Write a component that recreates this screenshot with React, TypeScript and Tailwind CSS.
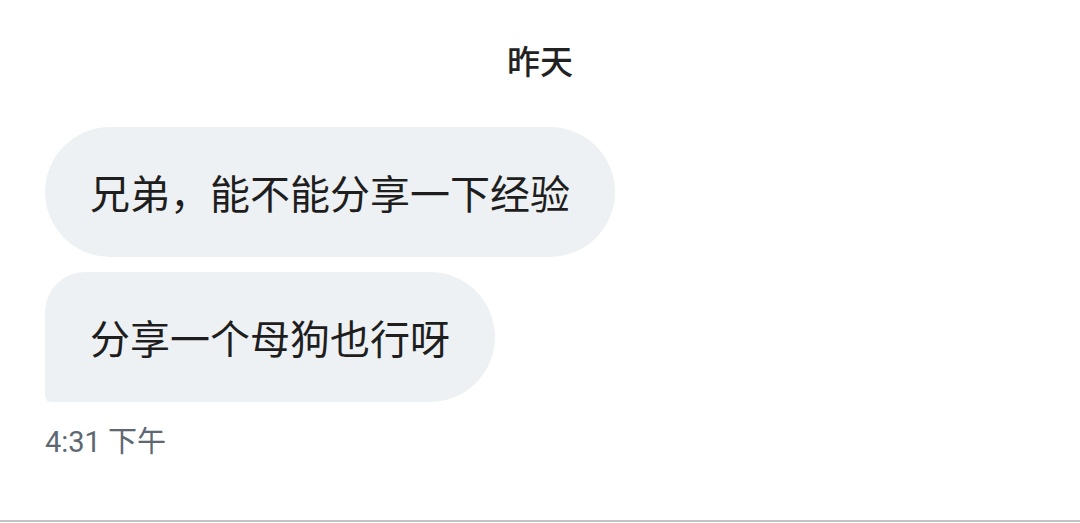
import React from "react";

export default function App() {
  const cjk = { fontFamily: '"Noto Sans CJK SC", "Noto Sans", sans-serif' };
  return (
    <div className="w-[1080px] h-[523px] bg-white flex flex-col overflow-hidden" style={cjk}>
      <div className="pt-[44px] h-[127px] text-center text-[33px] leading-[33px] font-medium text-[#222222]">
        昨天
      </div>
      <div className="flex flex-col items-start pl-[45px] gap-[15px]">
        <div className="h-[130px] flex items-center px-[45px] rounded-full bg-[#eef1f3] text-[40px] leading-[40px] text-[#1e1e1e]">
          兄弟，能不能分享一下经验
        </div>
        <div className="h-[130px] flex items-center px-[45px] rounded-tl-[40px] rounded-bl-[6px] rounded-r-[65px] bg-[#eef1f3] text-[40px] leading-[40px] text-[#1e1e1e]">
          分享一个母狗也行呀
        </div>
        <div
          className="mt-[11px] text-[29px] leading-[29px] text-[#5d6872]"
          style={{ fontFamily: 'Roboto, "Noto Sans CJK SC", sans-serif' }}
        >
          4:31 下午
        </div>
      </div>
      <div className="flex-1" />
      <div className="h-[2px] bg-[#c4c4c4] mb-[1px]" />
    </div>
  );
}
